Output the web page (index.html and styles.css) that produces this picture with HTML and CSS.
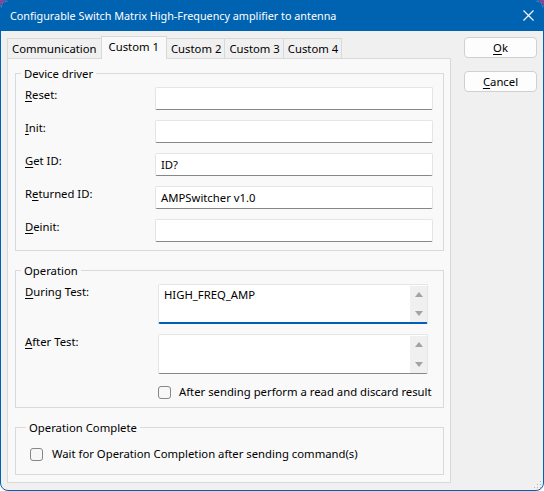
FILE: index.html
```html
<!DOCTYPE html>
<html>
<head>
<meta charset="utf-8">
<title>Configurable Switch Matrix</title>
<link rel="stylesheet" href="styles.css">
</head>
<body>
<div class="window">
  <div class="titlebar">
    <span class="title">Configurable Switch Matrix High-Frequency amplifier to antenna</span>
    <svg class="close" width="11" height="11" viewBox="0 0 11 11"><path d="M0.5 0.5L10.5 10.5M10.5 0.5L0.5 10.5" stroke="#ffffff" stroke-width="1.1"/></svg>
  </div>
  <div class="client">
    <div class="tabarea">
      <div class="tabs">
        <div class="tab">Communication</div>
        <div class="tab active">Custom 1</div>
        <div class="tab">Custom 2</div>
        <div class="tab">Custom 3</div>
        <div class="tab">Custom 4</div>
      </div>
      <div class="panel">
        <fieldset class="group">
          <legend>Device driver</legend>
          <div class="grid driver">
            <label class="lbl"><u>R</u>eset:</label><div class="edit"></div>
            <label class="lbl"><u>I</u>nit:</label><div class="edit"></div>
            <label class="lbl"><u>G</u>et ID:</label><div class="edit">ID?</div>
            <label class="lbl">R<u>e</u>turned ID:</label><div class="edit">AMPSwitcher v1.0</div>
            <label class="lbl"><u>D</u>einit:</label><div class="edit"></div>
          </div>
        </fieldset>
        <fieldset class="group group-op">
          <legend>Operation</legend>
          <div class="grid operation">
            <label class="lbl"><u>D</u>uring Test:</label>
            <div class="memo focused">
              <div class="memo-text">HIGH_FREQ_AMP</div>
              <div class="memo-scroll">
                <div class="arrow"><svg width="8" height="5" viewBox="0 0 8 5"><path d="M0 5L4 0L8 5Z" fill="#a3a3a3"/></svg></div>
                <div class="arrow"><svg width="8" height="5" viewBox="0 0 8 5"><path d="M0 0L8 0L4 5Z" fill="#a3a3a3"/></svg></div>
              </div>
            </div>
            <label class="lbl"><u>A</u>fter Test:</label>
            <div class="memo">
              <div class="memo-text"></div>
              <div class="memo-scroll">
                <div class="arrow"><svg width="8" height="5" viewBox="0 0 8 5"><path d="M0 5L4 0L8 5Z" fill="#a3a3a3"/></svg></div>
                <div class="arrow"><svg width="8" height="5" viewBox="0 0 8 5"><path d="M0 0L8 0L4 5Z" fill="#a3a3a3"/></svg></div>
              </div>
            </div>
            <label class="check check-op"><input type="checkbox" class="box"><span>After sending perform a read and discard result</span></label>
          </div>
        </fieldset>
        <fieldset class="group group-complete">
          <legend>Operation Complete</legend>
          <label class="check check-complete"><input type="checkbox" class="box"><span>Wait for Operation Completion after sending command(s)</span></label>
        </fieldset>
      </div>
    </div>
    <div class="buttons">
      <button class="btn"><u>O</u>k</button>
      <button class="btn"><u>C</u>ancel</button>
    </div>
  </div>
  <svg class="grip" width="9" height="9" viewBox="0 0 9 9">
    <rect x="7" y="1" width="1" height="1" fill="#b8b8b8"/>
    <rect x="4" y="4" width="1" height="1" fill="#b8b8b8"/>
    <rect x="7" y="4" width="1" height="1" fill="#b8b8b8"/>
    <rect x="1" y="7" width="1" height="1" fill="#b8b8b8"/>
    <rect x="4" y="7" width="1" height="1" fill="#b8b8b8"/>
    <rect x="7" y="7" width="1" height="1" fill="#b8b8b8"/>
  </svg>
</div>
</body>
</html>
```
FILE: styles.css
```css
* { box-sizing: border-box; }
html, body { margin: 0; padding: 0; }
body {
  width: 544px;
  height: 491px;
  background: linear-gradient(to bottom, #8c4596 0, #8c4596 40px, #ffffff 40px);
  font-family: "Noto Sans", "Open Sans", sans-serif;
  font-size: 11.3px;
  line-height: 16px;
  color: #000;
}
u { text-decoration: underline; text-underline-offset: 2px; }
.window {
  position: relative;
  width: 544px;
  height: 491px;
  border: 1px solid #0063b1;
  border-radius: 8px;
  overflow: hidden;
  background: #f0f0f0;
  display: flex;
  flex-direction: column;
}
.titlebar {
  height: 30px;
  flex: none;
  background: #0063b1;
  color: #fff;
  display: flex;
  align-items: center;
  justify-content: space-between;
  padding: 0 9px 0 9px;
  font-size: 10.8px;
}
.title { white-space: nowrap; }
.close { display: block; margin-top: -1px; }
.client {
  flex: 1;
  display: flex;
  padding: 5px 5px 0 6px;
}
.tabarea {
  width: 444px;
  display: flex;
  flex-direction: column;
}
.tabs {
  display: flex;
  align-items: flex-end;
  height: 23px;
  position: relative;
  z-index: 1;
}
.tab {
  height: 20px;
  margin-bottom: 1px;
  line-height: 20px;
  padding: 0 3px 0 4px;
  background: #f0f0f0;
  border: 1px solid #d9d9d9;
  border-bottom: none;
  margin-right: -1px;
  white-space: nowrap;
}
.tab:first-child { padding: 0 4px; }
.tab.active {
  height: 23px;
  margin-bottom: 0;
  padding: 0 7px 3px 7px;
  line-height: 19px;
  background: #f9f9f9;
  position: relative;
  z-index: 2;
}
.panel {
  margin-top: -1px;
  height: 425px;
  background: #f9f9f9;
  border: 1px solid #d9d9d9;
  padding: 7px 6px 0 7px;
  display: flex;
  flex-direction: column;
  gap: 12px;
}
.group {
  margin: 0;
  min-inline-size: 0;
  border: 1px solid #dadada;
  padding: 6px 10px 8px 9px;
}
.group legend {
  padding: 0 3px;
  margin-left: -4px;
  line-height: 15px;
}
.grid { display: grid; }
.driver {
  grid-template-columns: 130px 278px;
  grid-auto-rows: 23px;
  row-gap: 10px;
}
.lbl { white-space: nowrap; }
.edit {
  background: #fff;
  border: 1px solid #e5e5e5;
  border-bottom-color: #878787;
  border-radius: 2px;
  padding: 0 5px;
  line-height: 21px;
  white-space: nowrap;
}
.group-op { padding: 6px 15px 7px 9px; }
.operation {
  grid-template-columns: 133px 270px;
  grid-template-rows: 40px 40px 16px;
  row-gap: 10px;
}
.memo {
  display: flex;
  background: #fff;
  border: 1px solid #e5e5e5;
  border-bottom-color: #878787;
  border-radius: 2px;
}
.memo.focused {
  border-bottom: 2px solid #005fb8;
}
.memo-text {
  flex: 1;
  padding: 2px 5px 0 5px;
}
.memo-scroll {
  width: 17px;
  background: #f0f0f0;
  display: flex;
  flex-direction: column;
  justify-content: space-between;
  margin-top: 1px;
}
.arrow {
  height: 17px;
  display: flex;
  align-items: center;
  justify-content: center;
}
.arrow svg { display: block; }
.check {
  display: flex;
  align-items: center;
  gap: 8px;
  white-space: nowrap;
}
.check-op { grid-column: 2; }
.box {
  appearance: none;
  -webkit-appearance: none;
  margin: 0;
  width: 13px;
  height: 13px;
  border: 1px solid #868686;
  border-radius: 3px;
  background: #f7f7f7;
  flex: none;
}
.group-complete { padding: 11px 10px 12px 14px; }
.check-complete { gap: 9px; }
.buttons {
  margin-left: 13px;
  padding-top: 1px;
  display: flex;
  flex-direction: column;
  gap: 13px;
}
.btn {
  width: 73px;
  height: 21px;
  padding: 0;
  background: #fdfdfd;
  border: 1px solid #d0d0d0;
  border-radius: 4px;
  font-family: "Noto Sans", "Open Sans", sans-serif;
  font-size: 11.3px;
  line-height: 19px;
  color: #000;
}
.grip {
  position: absolute;
  right: 1px;
  bottom: 1px;
}
```
